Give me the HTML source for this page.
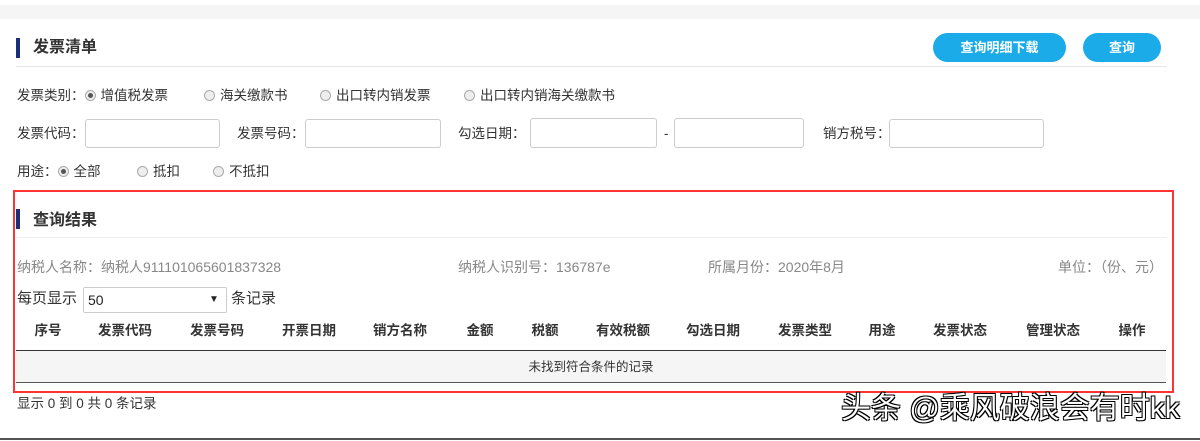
<!DOCTYPE html><html><head><meta charset="utf-8"><style>
body{margin:0;width:1200px;height:441px;position:relative;background:#fff;font-family:"Liberation Sans","Noto Sans CJK SC",sans-serif;font-size:13px;color:#333;overflow:hidden}
.a{position:absolute;white-space:nowrap}
.t{line-height:16px;font-size:13.5px}
.inp{position:absolute;border:1px solid #ccc;border-radius:3px;height:27px;background:#fff}
.rad{display:inline-block;width:9px;height:9px;border:1px solid #aaa;border-radius:50%;background:#eee;vertical-align:-1px;margin-right:5px;position:relative}
.rad.on::after{content:"";position:absolute;left:2px;top:2px;width:5px;height:5px;border-radius:50%;background:#555}
.btn{position:absolute;background:#1aabe8;color:#fff;border-radius:15px;height:29px;line-height:29px;text-align:center;font-weight:bold;font-size:13px}
.th{position:absolute;top:323px;font-weight:bold;transform:translateX(-50%);line-height:16px;font-size:13.5px}
</style></head><body>
<div class="a" style="left:0;top:5px;width:1200px;height:14px;background:#f5f5f5"></div>
<div class="a" style="left:16px;top:38px;width:4px;height:20px;background:#1a2f7a"></div>
<div class="a" style="left:33px;top:39px;font-size:16px;font-weight:bold;line-height:18px">发票清单</div>
<div class="a" style="left:16px;top:66px;width:1151px;height:1px;background:#e6e6e6"></div>
<div class="btn" style="left:933px;top:33px;width:133px">查询明细下载</div>
<div class="btn" style="left:1083px;top:33px;width:78px">查询</div>
<div class="a t" style="left:17px;top:88px">发票类别：<span class="rad on"></span>增值税发票</div>
<div class="a t" style="left:204px;top:88px"><span class="rad"></span>海关缴款书</div>
<div class="a t" style="left:320px;top:88px"><span class="rad"></span>出口转内销发票</div>
<div class="a t" style="left:464px;top:88px"><span class="rad"></span>出口转内销海关缴款书</div>
<div class="a t" style="left:17px;top:126px">发票代码：</div>
<div class="inp" style="left:85px;top:119px;width:133px"></div>
<div class="a t" style="left:237px;top:126px">发票号码：</div>
<div class="inp" style="left:305px;top:119px;width:134px"></div>
<div class="a t" style="left:458px;top:126px">勾选日期：</div>
<div class="inp" style="left:530px;top:118px;width:125px;height:28px"></div>
<div class="a t" style="left:664px;top:126px">-</div>
<div class="inp" style="left:674px;top:118px;width:128px;height:28px"></div>
<div class="a t" style="left:823px;top:126px">销方税号：</div>
<div class="inp" style="left:889px;top:119px;width:153px"></div>
<div class="a t" style="left:17px;top:164px">用途：<span class="rad on"></span>全部</div>
<div class="a t" style="left:137px;top:164px"><span class="rad"></span>抵扣</div>
<div class="a t" style="left:213px;top:164px"><span class="rad"></span>不抵扣</div>
<div class="a" style="left:13px;top:190px;width:1157px;height:199px;border:2px solid #f33"></div>
<div class="a" style="left:16px;top:209px;width:4px;height:20px;background:#1a2f7a"></div>
<div class="a" style="left:33px;top:212px;font-size:16px;font-weight:bold;line-height:18px">查询结果</div>
<div class="a" style="left:16px;top:237px;width:1151px;height:1px;background:#eee"></div>
<div class="a" style="left:17px;top:259px;color:#888;font-size:14px;line-height:16px">纳税人名称：纳税人911101065601837328</div>
<div class="a" style="left:458px;top:259px;color:#888;font-size:14px;line-height:16px">纳税人识别号：136787e</div>
<div class="a" style="left:708px;top:259px;color:#888;font-size:14px;line-height:16px">所属月份：2020年8月</div>
<div class="a" style="left:1058px;top:259px;color:#888;font-size:14px;line-height:16px">单位：（份、元）</div>
<div class="a" style="left:17px;top:290px;font-size:15px;line-height:18px">每页显示</div>
<div class="a" style="left:83px;top:287px;width:142px;height:24px;border:1px solid #ccc;border-radius:2px"></div>
<div class="a" style="left:88px;top:291px;font-size:14px;line-height:18px;color:#222">50</div>
<div class="a" style="left:209px;top:291px;font-size:10px;line-height:18px;color:#222">▼</div>
<div class="a" style="left:231px;top:290px;font-size:15px;line-height:18px">条记录</div>
<div class="th" style="left:48px">序号</div><div class="th" style="left:125px">发票代码</div><div class="th" style="left:217px">发票号码</div><div class="th" style="left:309px">开票日期</div><div class="th" style="left:400px">销方名称</div><div class="th" style="left:480px">金额</div><div class="th" style="left:545px">税额</div><div class="th" style="left:623px">有效税额</div><div class="th" style="left:713px">勾选日期</div><div class="th" style="left:805px">发票类型</div><div class="th" style="left:882px">用途</div><div class="th" style="left:960px">发票状态</div><div class="th" style="left:1053px">管理状态</div><div class="th" style="left:1132px">操作</div>
<div class="a" style="left:16px;top:350px;width:1150px;height:1px;background:#333"></div>
<div class="a" style="left:16px;top:351px;width:1150px;height:31px;background:#f5f5f5"></div>
<div class="a" style="left:16px;top:382px;width:1150px;height:1px;background:#555"></div>
<div class="a t" style="left:16px;top:359px;width:1150px;text-align:center;font-size:12.5px">未找到符合条件的记录</div>
<div class="a t" style="left:17px;top:396px">显示 0 到 0 共 0 条记录</div>
<div class="a" style="left:841px;top:392px;font-size:30px;line-height:34px;color:#fff;text-shadow:1px 1px 0 #000,-1px -1px 0 #000,1px -1px 0 #000,-1px 1px 0 #000">头条 @乘风破浪会有时kk</div>
<div class="a" style="left:0;top:438px;width:1200px;height:2px;background:#555"></div>
</body></html>
